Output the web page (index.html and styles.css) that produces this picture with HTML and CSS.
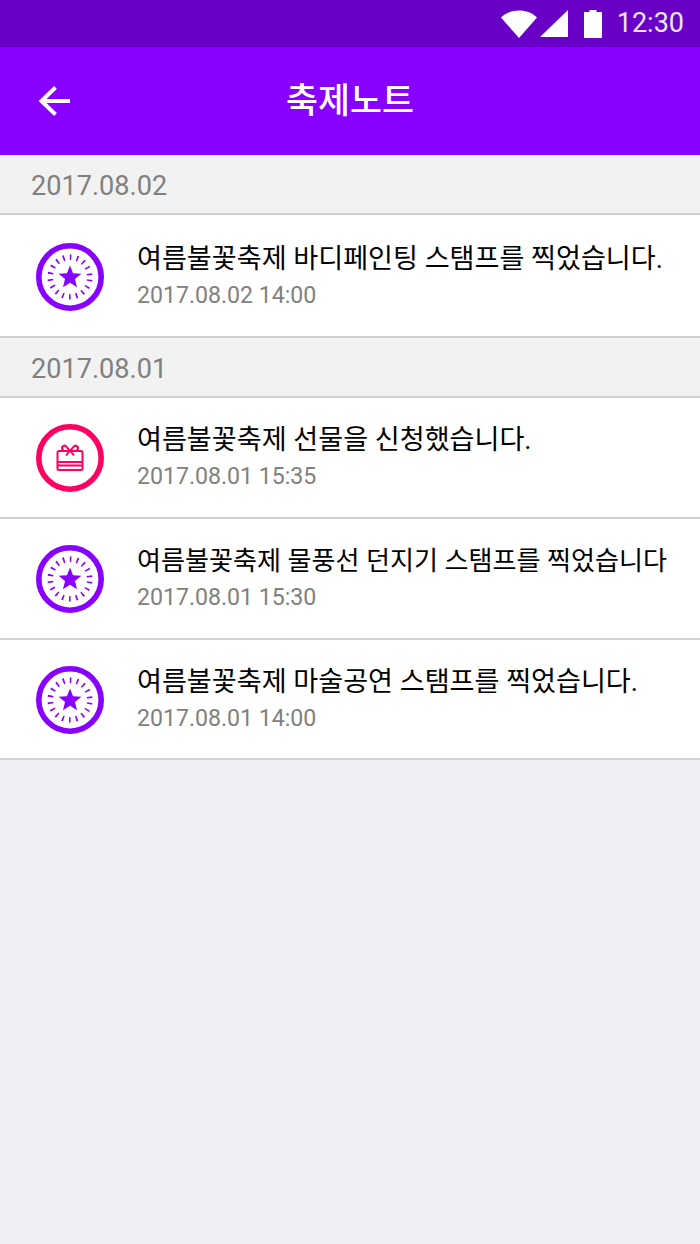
FILE: index.html
```html
<!DOCTYPE html>
<html lang="ko">
<head>
    <meta charset="UTF-8">
    <meta name="viewport" content="width=device-width, initial-scale=1.0">
    <title>축제노트</title>
    <link rel="stylesheet" href="styles.css">
</head>
<body>
    <svg class="defs" width="0" height="0">
        <defs>
            <g id="stamp">
                <circle cx="34" cy="34" r="31.200" fill="#fff" stroke="#8800ff" stroke-width="5.600"/>
                <circle cx="34" cy="34" r="19.750" fill="none" stroke="#8800ff" stroke-width="5.500" stroke-dasharray="1.600 5.294" stroke-dashoffset="-2.647"/>
                <polygon points="34,22.500 37.060,30.290 45.410,30.790 38.950,36.110 41.050,44.210 34,39.700 26.950,44.210 29.050,36.110 22.590,30.790 30.940,30.290" fill="#8800ff"/>
            </g>
            <g id="gift">
                <circle cx="34" cy="34" r="31.200" fill="#fff" stroke="#ff0062" stroke-width="5.600"/>
                <g fill="none" stroke="#ff0062" stroke-width="2">
                    <rect x="21.500" y="27" width="25" height="19" rx="1.500"/>
                    <path d="M21.500 38h25M21.500 41.500h25"/>
                    <path d="M34 27l-3.500-4.200a2.400 2.400 0 0 0-4 2.700l1.600 1.500M34 27l3.500-4.200a2.400 2.400 0 0 1 4 2.700l-1.600 1.500M34 26.500l-4 5M34 26.500l4 5"/>
                </g>
            </g>
        </defs>
    </svg>

    <div class="status-bar">
        <svg class="ic-wifi" width="36" height="28" viewBox="0 0 36 28"><path d="M0 7.500C4.500 3 11 .5 18 .5S31.500 3 36 7.500L18 28z" fill="#fff"/></svg>
        <svg class="ic-signal" width="28" height="27" viewBox="0 0 28 27"><path d="M28 0v27H0z" fill="#fff"/></svg>
        <svg class="ic-battery" width="18" height="28" viewBox="0 0 18 28"><path d="M5.500 2V0h7v2H18v26H0V2z" fill="#fff"/></svg>
        <span class="clock">12:30</span>
    </div>

    <header class="app-bar">
        <svg class="back" width="36" height="34" viewBox="0 0 36 34"><path d="M33 17H5M18.500 3.500L4.500 17l14 13.500" fill="none" stroke="#fff" stroke-width="4"/></svg>
        <h1>축제노트</h1>
    </header>

    <main>
        <div class="date-row">2017.08.02</div>
        <div class="note note-tall">
            <svg class="note-icon" width="68" height="68" viewBox="0 0 68 68"><use href="#stamp"/></svg>
            <div class="note-text">
                <div class="note-title">여름불꽃축제 바디페인팅 스탬프를 찍었습니다.</div>
                <div class="note-time">2017.08.02 14:00</div>
            </div>
        </div>

        <div class="date-row">2017.08.01</div>
        <div class="note">
            <svg class="note-icon" width="68" height="68" viewBox="0 0 68 68"><use href="#gift"/></svg>
            <div class="note-text">
                <div class="note-title">여름불꽃축제 선물을 신청했습니다.</div>
                <div class="note-time">2017.08.01 15:35</div>
            </div>
        </div>
        <div class="note">
            <svg class="note-icon" width="68" height="68" viewBox="0 0 68 68"><use href="#stamp"/></svg>
            <div class="note-text">
                <div class="note-title note-title-small">여름불꽃축제 물풍선 던지기 스탬프를 찍었습니다</div>
                <div class="note-time">2017.08.01 15:30</div>
            </div>
        </div>
        <div class="note">
            <svg class="note-icon" width="68" height="68" viewBox="0 0 68 68"><use href="#stamp"/></svg>
            <div class="note-text">
                <div class="note-title">여름불꽃축제 마술공연 스탬프를 찍었습니다.</div>
                <div class="note-time">2017.08.01 14:00</div>
            </div>
        </div>
    </main>
</body>
</html>
```

FILE: styles.css
```css
body {
    margin: 0;
    min-height: 1244px;
    background-color: #efeff4;
    font-family: Roboto, "Noto Sans CJK KR", sans-serif;
}

.defs {
    display: block;
    height: 0;
}

.status-bar {
    height: 47px;
    background-color: #6800c6;
    display: flex;
    align-items: center;
    justify-content: flex-end;
    padding-right: 16px;
    box-sizing: border-box;
}

.ic-wifi {
    margin-right: 3px;
}

.ic-signal {
    margin-right: 16px;
}

.ic-battery {
    margin-right: 15px;
}

.clock {
    color: #f0e4fb;
    font-size: 27px;
    line-height: 47px;
}

.app-bar {
    height: 108px;
    padding-bottom: 6px;
    box-sizing: border-box;
    background-color: #8800ff;
    display: flex;
    align-items: center;
    justify-content: center;
    position: relative;
}

.back {
    position: absolute;
    left: 37px;
    top: 37px;
}

h1 {
    margin: 0;
    color: #fff;
    font-size: 34.800px;
    font-weight: 500;
}

.date-row {
    height: 60.250px;
    box-sizing: border-box;
    padding: 4px 0 0 31px;
    background-color: #f2f2f2;
    border-bottom: 2px solid #cfcfcf;
    color: #808080;
    font-size: 27.100px;
    line-height: 54px;
}

.note {
    height: 120.750px;
    box-sizing: border-box;
    background-color: #fff;
    border-bottom: 2px solid #cfcfcf;
    display: flex;
    align-items: center;
    padding: 2px 0 0 36px;
}

.note-tall {
    height: 122.500px;
}

.note-icon {
    flex: none;
    margin-right: 33px;
}

.note-title {
    color: #000;
    font-size: 27.100px;
    line-height: 36px;
    margin-bottom: 2px;
    white-space: nowrap;
}

.note-title-small {
    font-size: 26.100px;
}

.note-time {
    color: #808080;
    font-size: 23.100px;
    line-height: 34px;
}
```
